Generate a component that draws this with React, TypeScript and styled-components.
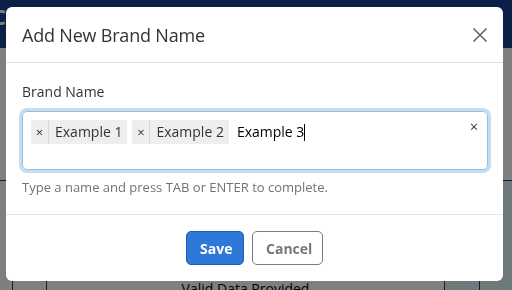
import React from "react";
import styled, { createGlobalStyle } from "styled-components";

const Global = createGlobalStyle`
  html, body { margin: 0; padding: 0; }
  body { font-family: "Open Sans", "Liberation Sans", sans-serif; width: 512px; height: 290px; overflow: hidden; background: #fff; }
  * { box-sizing: border-box; }
`;

const Page = styled.div`
  width: 512px;
  height: 290px;
  display: flex;
  flex-direction: column;
  background: #fff;
`;

const TopBar = styled.div`
  height: 48px;
  background: #17408c;
  color: #fff;
  font-size: 22px;
  font-weight: 700;
  padding: 6px 0 0 0;
  line-height: 20px;
  overflow: hidden;
  text-indent: -8px;
`;

const Gap = styled.div`
  height: 132px;
  background: #fff;
`;

const Table = styled.div`
  flex: 1;
  border-top: 1px solid #1a3f8a;
  display: grid;
  grid-template-columns: 13px 34px 1fr 35px 32px;
  background: #fff;
`;

const Cell = styled.div<{ $tint?: boolean }>`
  border-right: 1px solid #1a3f8a;
  background: ${(p) => (p.$tint ? "#dcf5f5" : "#fff")};
  display: flex;
  align-items: flex-end;
  justify-content: center;
  font-size: 14px;
  color: #000;
  line-height: 1;
  overflow: hidden;
  &:last-child { border-right: none; }
`;

const CellText = styled.span`
  transform: translateY(6px);
`;

const Overlay = styled.div`
  position: fixed;
  inset: 0;
  background: rgba(0, 0, 0, 0.5);
  padding: 7px 9px 0 6px;
`;

const Modal = styled.div`
  width: 497px;
  height: 274px;
  background: #fff;
  border-radius: 6px;
  display: flex;
  flex-direction: column;
  overflow: hidden;
`;

const Header = styled.div`
  height: 56px;
  border-bottom: 1px solid #dee2e6;
  display: flex;
  align-items: center;
  justify-content: space-between;
  padding: 0 14px 0 16px;
`;

const Title = styled.h4`
  margin: 0;
  font-size: 18px;
  font-weight: 400;
  color: #333;
  letter-spacing: -0.2px;
`;

const CloseBtn = styled.button`
  border: none;
  background: none;
  padding: 0;
  width: 18px;
  height: 18px;
  display: flex;
  align-items: center;
  justify-content: center;
  cursor: pointer;
`;

const Body = styled.div`
  height: 152px;
  border-bottom: 1px solid #e5e5e5;
  padding: 19px 16px 0 16px;
  display: flex;
  flex-direction: column;
`;

const Label = styled.label`
  font-size: 14px;
  color: #333;
  line-height: 20px;
  margin-bottom: 9px;
`;

const InputBox = styled.div`
  width: 466px;
  height: 59px;
  border: 1px solid #94bde4;
  border-radius: 5px;
  box-shadow: 0 0 0 3px #c6dcef;
  padding: 8px 8px 0 8px;
  position: relative;
  display: flex;
  align-items: flex-start;
  gap: 5px;
`;

const Tag = styled.span`
  display: inline-flex;
  align-items: center;
  height: 24px;
  background: #eeeeee;
  border-radius: 2px;
  font-size: 14px;
  color: #333;
`;

const TagRemove = styled.span`
  width: 18px;
  height: 24px;
  display: flex;
  align-items: center;
  justify-content: center;
  border-right: 1px solid #d8d8d8;
  font-size: 13px;
  color: #333;
`;

const TagLabel = styled.span`
  padding: 0 5px 0 6px;
  line-height: 24px;
`;

const Typed = styled.span`
  margin-left: 3px;
  font-size: 14px;
  line-height: 24px;
  color: #000;
  display: inline-flex;
  align-items: center;
`;

const Caret = styled.span`
  display: inline-block;
  width: 1px;
  height: 17px;
  background: #000;
`;

const ClearAll = styled.span`
  position: absolute;
  right: 9px;
  top: 7px;
  font-size: 14px;
  color: #333;
  line-height: 16px;
`;

const Help = styled.div`
  margin-top: 8px;
  font-size: 13px;
  color: #737373;
  line-height: 18px;
`;

const Footer = styled.div`
  flex: 1;
  display: flex;
  justify-content: center;
  align-items: flex-start;
  padding-top: 16px;
  gap: 8px;
`;

const Button = styled.button<{ $primary?: boolean }>`
  height: 34px;
  padding: 0 13px;
  border-radius: 5px;
  font-family: "Open Sans", "Liberation Sans", sans-serif;
  font-size: 14px;
  font-weight: 700;
  border: 1px solid ${(p) => (p.$primary ? "#1c5fb4" : "#7a7a7a")};
  background: ${(p) => (p.$primary ? "#2f78d8" : "#fff")};
  color: ${(p) => (p.$primary ? "#fff" : "#777")};
  width: ${(p) => (p.$primary ? "58px" : "71px")};
`;

export default function App() {
  return (
    <>
      <Global />
      <Page>
        <TopBar>C</TopBar>
        <Gap />
        <Table>
          <Cell />
          <Cell />
          <Cell>
            <CellText>Valid Data Provided</CellText>
          </Cell>
          <Cell $tint />
          <Cell $tint />
        </Table>
      </Page>
      <Overlay>
        <Modal>
          <Header>
            <Title>Add New Brand Name</Title>
            <CloseBtn aria-label="Close">
              <svg width="16" height="16" viewBox="0 0 16 16">
                <path d="M1.5 1.5 L14.5 14.5 M14.5 1.5 L1.5 14.5" stroke="#666" strokeWidth="1.6" fill="none" />
              </svg>
            </CloseBtn>
          </Header>
          <Body>
            <Label>Brand Name</Label>
            <InputBox>
              <Tag>
                <TagRemove>×</TagRemove>
                <TagLabel>Example 1</TagLabel>
              </Tag>
              <Tag>
                <TagRemove>×</TagRemove>
                <TagLabel>Example 2</TagLabel>
              </Tag>
              <Typed>
                Example 3<Caret />
              </Typed>
              <ClearAll>×</ClearAll>
            </InputBox>
            <Help>Type a name and press TAB or ENTER to complete.</Help>
          </Body>
          <Footer>
            <Button $primary>Save</Button>
            <Button>Cancel</Button>
          </Footer>
        </Modal>
      </Overlay>
    </>
  );
}
